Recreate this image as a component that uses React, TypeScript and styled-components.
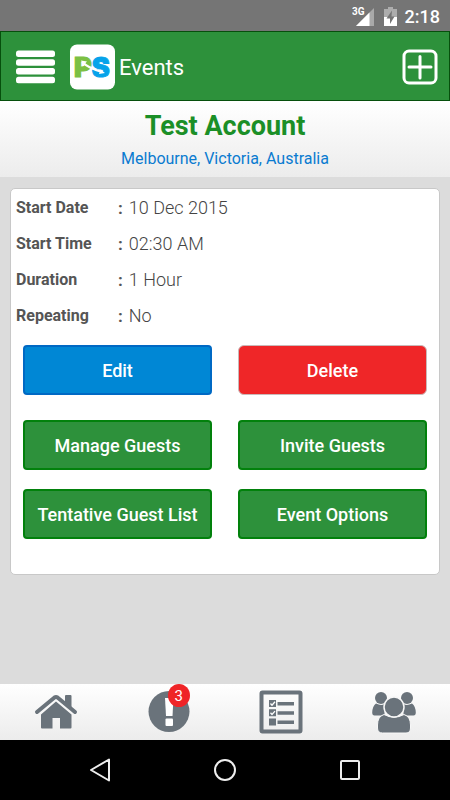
import React from "react";
import styled, { createGlobalStyle } from "styled-components";

const GlobalStyle = createGlobalStyle`
  *, *::before, *::after { box-sizing: border-box; }
  body { margin: 0; background: #dcdcdc; font-family: Roboto, "Liberation Sans", sans-serif; }
  button { font-family: inherit; cursor: pointer; }
  svg { display: block; }
`;

const Screen = styled.div`
  min-height: 100vh;
  display: flex;
  flex-direction: column;
`;

const StatusBar = styled.div`
  height: 31px;
  padding: 0 10px;
  display: flex;
  align-items: center;
  justify-content: flex-end;
  gap: 8px;
  background: #757575;
  color: #fff;
`;

const Clock = styled.time`
  font-size: 18px;
  line-height: 24px;
  font-weight: 500;
  padding-top: 2px;
`;

const Header = styled.header`
  height: 70px;
  padding: 2px 11px 0 15px;
  display: flex;
  align-items: center;
  background: #2d913b;
  border: 1px solid #064f0c;
`;

const IconButton = styled.button`
  padding: 0;
  border: 0;
  background: none;
  color: #fff;
`;

const Logo = styled.svg`
  margin-left: 13px;
`;

const HeaderTitle = styled.h1`
  flex: 1;
  margin: 0;
  padding: 2px 0 0 3px;
  color: #fff;
  font-size: 22px;
  line-height: 30px;
  font-weight: 400;
`;

const Banner = styled.section`
  height: 76px;
  padding-top: 7px;
  text-align: center;
  background: linear-gradient(#ffffff, #ececec);
`;

const AccountName = styled.h2`
  margin: 0;
  color: #1b8f27;
  font-size: 27px;
  line-height: 36px;
  font-weight: 700;
`;

const Place = styled.p`
  margin: 4px 0 0;
  color: #0a7bd0;
  font-size: 16px;
  line-height: 22px;
`;

const Main = styled.main`
  flex: 1;
  padding: 11px 10px;
`;

const Card = styled.section`
  padding: 0 12px 35px;
  background: #fff;
  border: 1px solid #c8c8c8;
  border-radius: 5px;
`;

const Details = styled.dl`
  margin: 0 -7px;
  padding-top: 1px;
`;

const DetailRow = styled.div`
  display: flex;
  align-items: center;
  height: 36px;
`;

const Term = styled.dt`
  width: 102px;
  color: #555;
  font-size: 16px;
  line-height: 24px;
  font-weight: 700;
`;

const Value = styled.dd`
  margin: 0;
  display: flex;
  gap: 6px;
  color: #444;
  font-size: 18px;
  line-height: 24px;
  font-weight: 300;
`;

const Colon = styled.span`
  color: #555;
  font-size: 17px;
  font-weight: 700;
`;

const ButtonRow = styled.div<{ $gap: number }>`
  display: grid;
  grid-template-columns: 1fr 1fr;
  gap: 26px;
  margin-top: ${(p) => p.$gap}px;
`;

const tones = {
  blue: { fill: "#0087d5", edge: "#0069c4" },
  red: { fill: "#ef2628", edge: "#c9b9b9" },
  green: { fill: "#2d913b", edge: "#02810c" },
};

const ActionButton = styled.button<{ $tone: keyof typeof tones }>`
  height: 50px;
  padding: 2px 0 0;
  color: #fff;
  background: ${(p) => tones[p.$tone].fill};
  border: ${(p) => (p.$tone === "red" ? 1 : 2)}px solid ${(p) => tones[p.$tone].edge};
  border-radius: ${(p) => (p.$tone === "red" ? 6 : 4)}px;
  font-size: 18px;
  line-height: 24px;
  font-weight: 500;
  white-space: nowrap;
`;

const TabBar = styled.nav`
  height: 56px;
  display: grid;
  grid-template-columns: repeat(4, 1fr);
  background: linear-gradient(#ffffff, #ececec);
`;

const Tab = styled.button`
  padding: 0;
  border: 0;
  background: none;
  color: #6a737b;
  display: flex;
  align-items: center;
  justify-content: center;
`;

const BadgeAnchor = styled.span`
  position: relative;
`;

const Badge = styled.span`
  position: absolute;
  top: -7px;
  right: 0;
  width: 22px;
  height: 23px;
  border-radius: 50%;
  background: #ef2427;
  color: #fff;
  font-size: 15px;
  line-height: 25px;
  text-align: center;
`;

const SystemBar = styled.nav`
  height: 60px;
  padding: 0 37px;
  display: grid;
  grid-template-columns: repeat(3, 1fr);
  background: #000;
`;

const SystemButton = styled.button`
  padding: 0;
  border: 0;
  background: none;
  display: flex;
  align-items: center;
  justify-content: center;
`;

const SignalIcon = () => (
  <svg width="24" height="20" viewBox="0 0 24 20" aria-label="3G signal" role="img">
    <path d="M22 2V20H4Z" fill="#a9a9a9" />
    <path d="M17.500 6.500V20H4Z" fill="#fff" />
    <text x="0" y="9" fill="#fff" fontSize="10" fontWeight="700" fontFamily="Roboto, sans-serif">3G</text>
  </svg>
);

const BatteryIcon = () => (
  <svg width="13" height="20" viewBox="0 0 13 20" aria-label="Battery charging" role="img">
    <path d="M4 1H9V3H13V11H0V3H4Z" fill="#adadad" />
    <path d="M0 11H13V20H0Z" fill="#fff" />
    <path d="M8 4.500 2.500 12.500H6V18L10.500 10.500H7.500Z" fill="#757575" />
  </svg>
);

const MenuIcon = () => (
  <svg width="40" height="34" viewBox="0 0 40 34" fill="#fff">
    <rect x="0" y="0.500" width="39" height="6.500" rx="2.500" />
    <rect x="0" y="9.300" width="39" height="6.500" rx="2.500" />
    <rect x="0" y="18" width="39" height="6.500" rx="2.500" />
    <rect x="0" y="26.800" width="39" height="6.500" rx="2.500" />
  </svg>
);

const BrandLogo = () => (
  <Logo width="47" height="46" viewBox="0 0 47 46" role="img" aria-label="PS">
    <rect x="1" y="0.500" width="45" height="45" rx="7" fill="#fff" />
    <text x="5" y="33" fontFamily="Inter, Roboto, sans-serif" fontWeight="900" fontSize="27" strokeWidth="1">
      <tspan fill="#7cc043" stroke="#7cc043">P</tspan>
      <tspan fill="#06a3ea" stroke="#06a3ea">S</tspan>
    </text>
    <path d="M14 18.500C17 22 23 25 33 28" fill="none" stroke="#fff" strokeWidth="2" />
    <path d="M12 16.500L18 17.500L14 21.500ZM36 29L30 30L31.500 25.500Z" fill="#fff" />
  </Logo>
);

const AddIcon = () => (
  <svg width="36" height="36" viewBox="0 0 36 36" fill="none" stroke="#fff" strokeWidth="3">
    <rect x="2" y="2" width="32" height="32" rx="5" />
    <path d="M18 7.500V29M7 18H29" strokeLinecap="round" />
  </svg>
);

const HomeIcon = () => (
  <svg width="44" height="44" viewBox="0 1 44 44" fill="currentColor">
    <path d="M31 7Q31 6 32 6H36.500Q37.500 6 37.500 7V19L31 13.500Z" />
    <path d="M3 23 20.500 8.500Q22 7.500 23.500 8.500L41 23" fill="none" stroke="currentColor" strokeWidth="4" strokeLinecap="round" strokeLinejoin="round" />
    <path d="M22 12.500 37.500 25.500V38.500Q37.500 39.500 36.500 39.500H26V29H18.500V39.500H8Q7 39.500 7 38.500V25.500Z" />
  </svg>
);

const AlertIcon = () => (
  <svg width="42" height="42" viewBox="0 0 42 42">
    <circle cx="21" cy="20.500" r="20.500" fill="#6a737b" />
    <path d="M17 7H25.500L24.500 25H18Z" fill="#fff" />
    <rect x="17.500" y="27.500" width="7.500" height="7.500" rx="1" fill="#fff" />
  </svg>
);

const ChecklistIcon = () => (
  <svg width="44" height="44" viewBox="0 0 44 44">
    <rect x="2.500" y="2.500" width="39" height="39" rx="1" fill="none" stroke="currentColor" strokeWidth="4" />
    <path d="M10 10h7v7h-7zM10 19.300h7v7h-7zM10 28.500h7v7h-7zM18.500 12h16.500v3.500h-16.500zM18.500 21.300h16.500v3.500h-16.500zM18.500 30.500h16.500v3.500h-16.500z" fill="currentColor" />
    <path d="M11.500 13.500l1.500 1.700 3-3.400M11.500 22.800l1.500 1.700 3-3.400" fill="none" stroke="#fff" strokeWidth="1.300" />
  </svg>
);

const GroupIcon = () => (
  <svg width="46" height="44" viewBox="0 0 46 44" fill="currentColor">
    <circle cx="10" cy="8" r="6" />
    <circle cx="36" cy="8" r="6" />
    <path d="M5 13.500Q10 16 13.500 14V25.500H3.500Q1.200 25.500 1.200 22.500Q1.500 16 5 13.500ZM41 13.500Q36 16 32.500 14V25.500H42.500Q44.800 25.500 44.800 22.500Q44.500 16 41 13.500Z" />
    <path d="M13 24.500Q23 30 33 24.500Q39.500 26.500 39.500 35V38Q39.500 43 35 43H11.500Q6.500 43 6.500 38V35Q6.500 26.500 13 24.500Z" stroke="#f7f7f7" strokeWidth="1" />
    <circle cx="23" cy="17" r="10" stroke="#f7f7f7" strokeWidth="1.500" />
  </svg>
);

const details = [
  { term: "Start Date", value: "10 Dec 2015" },
  { term: "Start Time", value: "02:30 AM" },
  { term: "Duration", value: "1 Hour" },
  { term: "Repeating", value: "No" },
];

export default function App() {
  return (
    <Screen>
      <GlobalStyle />
      <StatusBar>
        <SignalIcon />
        <BatteryIcon />
        <Clock>2:18</Clock>
      </StatusBar>
      <Header>
        <IconButton aria-label="Menu"><MenuIcon /></IconButton>
        <BrandLogo />
        <HeaderTitle>Events</HeaderTitle>
        <IconButton aria-label="Add event"><AddIcon /></IconButton>
      </Header>
      <Banner>
        <AccountName>Test Account</AccountName>
        <Place>Melbourne, Victoria, Australia</Place>
      </Banner>
      <Main>
        <Card>
          <Details>
            {details.map((d) => (
              <DetailRow key={d.term}>
                <Term>{d.term}</Term>
                <Value><Colon>:</Colon>{d.value}</Value>
              </DetailRow>
            ))}
          </Details>
          <ButtonRow $gap={11}>
            <ActionButton $tone="blue">Edit</ActionButton>
            <ActionButton $tone="red">Delete</ActionButton>
          </ButtonRow>
          <ButtonRow $gap={25}>
            <ActionButton $tone="green">Manage Guests</ActionButton>
            <ActionButton $tone="green">Invite Guests</ActionButton>
          </ButtonRow>
          <ButtonRow $gap={19}>
            <ActionButton $tone="green">Tentative Guest List</ActionButton>
            <ActionButton $tone="green">Event Options</ActionButton>
          </ButtonRow>
        </Card>
      </Main>
      <TabBar aria-label="Sections">
        <Tab aria-label="Home"><HomeIcon /></Tab>
        <Tab aria-label="Alerts">
          <BadgeAnchor>
            <AlertIcon />
            <Badge>3</Badge>
          </BadgeAnchor>
        </Tab>
        <Tab aria-label="Lists"><ChecklistIcon /></Tab>
        <Tab aria-label="Groups"><GroupIcon /></Tab>
      </TabBar>
      <SystemBar aria-label="System">
        <SystemButton aria-label="Back">
          <svg width="24" height="28" viewBox="0 0 24 28" fill="none" stroke="#eee" strokeWidth="2">
            <path d="M21 3.500V24.500L3 14Z" strokeLinejoin="round" />
          </svg>
        </SystemButton>
        <SystemButton aria-label="Home screen">
          <svg width="24" height="24" viewBox="0 0 24 24" fill="none" stroke="#eee" strokeWidth="2">
            <circle cx="12" cy="12" r="10" />
          </svg>
        </SystemButton>
        <SystemButton aria-label="Recent apps">
          <svg width="20" height="20" viewBox="0 0 20 20" fill="none" stroke="#eee" strokeWidth="2">
            <rect x="1" y="1" width="18" height="18" rx="1" />
          </svg>
        </SystemButton>
      </SystemBar>
    </Screen>
  );
}
